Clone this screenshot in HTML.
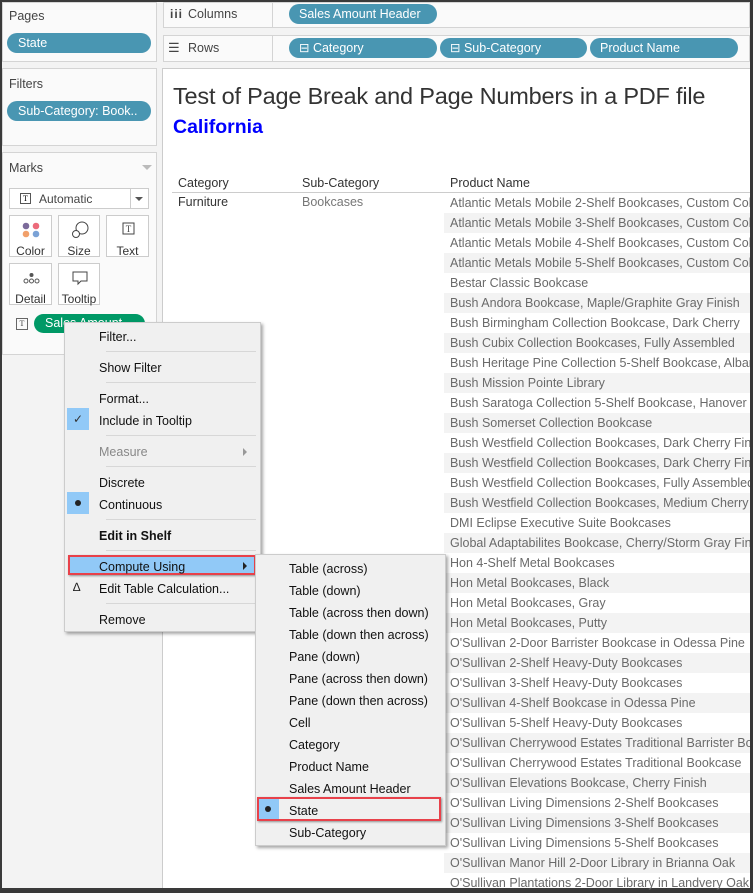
<!DOCTYPE html>
<html><head><meta charset="utf-8"><style>
*{box-sizing:border-box;margin:0;padding:0}
body{width:753px;height:890px;overflow:hidden;background:#3a3a3a;font-family:"Liberation Sans",Arial,sans-serif;position:relative}
.a{position:absolute}
#frame{left:2px;top:2px;width:748px;height:886px;background:#f3f3f3}
.panel{background:#fafafa;border:1px solid #d4d4d4}
.pill{position:absolute;background:#4996b2;color:#fff;border-radius:10px;font-size:12.5px;line-height:20px;height:20px;padding-left:10px;white-space:nowrap;overflow:hidden}
.lbl{font-size:12.5px;color:#444}
.card{position:absolute;background:#fff;border:1px solid #ccc;font-size:12px;color:#333;text-align:center}
.row{position:absolute;left:444px;width:306px;height:20px;font-size:12.5px;color:#6a6a6a;line-height:20px;padding-left:6px;white-space:nowrap;overflow:hidden}
.sh{background:#f3f3f3}
.mi{position:absolute;left:34px;font-size:12.5px;color:#111;white-space:nowrap}
.sep{position:absolute;left:41px;width:150px;height:1px;background:#d7d7d7}
.si{position:absolute;left:33px;font-size:12.5px;color:#111;white-space:nowrap}
</style></head><body>
<div id="frame" class="a"></div>
<div class="a panel" style="left:2px;top:2px;width:155px;height:60px"></div>
<div class="a lbl" style="left:9px;top:9px">Pages</div>
<div class="pill" style="left:7px;top:33px;width:144px;padding-left:11px">State</div>
<div class="a panel" style="left:2px;top:68px;width:155px;height:78px"></div>
<div class="a lbl" style="left:9px;top:77px">Filters</div>
<div class="pill" style="left:7px;top:101px;width:144px;padding-left:11px">Sub-Category: Book..</div>
<div class="a panel" style="left:2px;top:152px;width:155px;height:203px"></div>
<div class="a lbl" style="left:9px;top:161px">Marks</div>
<div class="a" style="left:142px;top:165px;width:0;height:0;border-left:5px solid transparent;border-right:5px solid transparent;border-top:5px solid #bbb"></div>
<div class="a" style="left:9px;top:188px;width:140px;height:21px;background:#fff;border:1px solid #ccc"></div>
<div class="a" style="left:20px;top:193px;width:11px;height:11px;border:1px solid #555;font-size:8px;line-height:9px;text-align:center;font-family:'Liberation Serif',serif">T</div>
<div class="a" style="left:39px;top:192px;font-size:12px;color:#444">Automatic</div>
<div class="a" style="left:130px;top:188px;width:1px;height:21px;background:#ccc"></div>
<div class="a" style="left:135px;top:197px;border-left:4px solid transparent;border-right:4px solid transparent;border-top:4px solid #555"></div>
<div class="card" style="left:9px;top:215px;width:43px;height:42px"><svg width="43" height="24"><circle cx="16" cy="10" r="3.3" fill="#7c6a9a"/><circle cx="26" cy="10" r="3.3" fill="#ec6a7a"/><circle cx="16" cy="18" r="3.3" fill="#f1a06a"/><circle cx="26" cy="18" r="3.3" fill="#7aa2d6"/></svg><div style="margin-top:1px">Color</div></div>
<div class="card" style="left:58px;top:215px;width:42px;height:42px"><svg width="42" height="24"><circle cx="23" cy="12" r="6" fill="none" stroke="#444"/><circle cx="17" cy="18" r="3.5" fill="#fff" stroke="#444"/></svg><div style="margin-top:1px">Size</div></div>
<div class="card" style="left:106px;top:215px;width:43px;height:42px"><svg width="43" height="24"><rect x="16" y="7" width="11" height="11" fill="none" stroke="#444"/><text x="21.5" y="16" font-size="9" text-anchor="middle" fill="#444" font-family="Liberation Serif">T</text></svg><div style="margin-top:1px">Text</div></div>
<div class="card" style="left:9px;top:263px;width:43px;height:42px"><svg width="43" height="24"><circle cx="21.5" cy="11" r="2" fill="#555"/><circle cx="16" cy="17" r="2" fill="none" stroke="#555"/><circle cx="21.5" cy="17" r="2" fill="none" stroke="#555"/><circle cx="27" cy="17" r="2" fill="none" stroke="#555"/></svg><div style="margin-top:1px">Detail</div></div>
<div class="card" style="left:58px;top:263px;width:42px;height:42px"><svg width="42" height="24"><path d="M14 8h14v9h-6l-3 3v-3h-5z" fill="none" stroke="#444"/></svg><div style="margin-top:1px">Tooltip</div></div>
<div class="a" style="left:16px;top:318px;width:12px;height:12px;border:1px solid #666;font-size:8px;line-height:10px;text-align:center;font-family:'Liberation Serif',serif;color:#444">T</div>
<div class="a" style="left:34px;top:314px;width:111px;height:19px;background:#009966;border-radius:10px;color:#fff;font-size:12.5px;line-height:19px;padding-left:11px">Sales Amount</div>
<div class="a panel" style="left:163px;top:2px;width:587px;height:26px;background:#fafafa"></div>
<div class="a" style="left:170px;top:7px;font-size:12px;color:#444;font-weight:bold;letter-spacing:1px">iii</div>
<div class="a lbl" style="left:188px;top:7px">Columns</div>
<div class="a" style="left:272px;top:2px;width:1px;height:26px;background:#d4d4d4"></div>
<div class="pill" style="left:289px;top:4px;width:148px">Sales Amount Header</div>
<div class="a panel" style="left:163px;top:35px;width:587px;height:27px"></div>
<div class="a" style="left:168px;top:40px;font-size:13px;color:#444">☰</div>
<div class="a lbl" style="left:188px;top:41px">Rows</div>
<div class="a" style="left:272px;top:35px;width:1px;height:27px;background:#d4d4d4"></div>
<div class="pill" style="left:289px;top:38px;width:148px">⊟ Category</div>
<div class="pill" style="left:440px;top:38px;width:147px">⊟ Sub-Category</div>
<div class="pill" style="left:590px;top:38px;width:148px">Product Name</div>
<div class="a" style="left:162px;top:68px;width:588px;height:820px;background:#fff;border-left:1px solid #ccc;border-top:1px solid #ccc"></div>
<div class="a" style="left:173px;top:83px;font-size:23.5px;color:#333;white-space:nowrap;letter-spacing:-0.2px">Test of Page Break and Page Numbers in a PDF file</div>
<div class="a" style="left:173px;top:116px;font-size:19.5px;color:#0000ff;font-weight:bold">California</div>
<div class="a" style="left:172px;top:192px;width:578px;height:1px;background:#ccc"></div>
<div class="a" style="left:178px;top:176px;font-size:12.5px;color:#333">Category</div>
<div class="a" style="left:302px;top:176px;font-size:12.5px;color:#333">Sub-Category</div>
<div class="a" style="left:450px;top:176px;font-size:12.5px;color:#333">Product Name</div>
<div class="a" style="left:178px;top:195px;font-size:12.5px;color:#333">Furniture</div>
<div class="a" style="left:302px;top:195px;font-size:12.5px;color:#777">Bookcases</div>
<div class="row" style="top:193px">Atlantic Metals Mobile 2-Shelf Bookcases, Custom Colors</div>
<div class="row sh" style="top:213px">Atlantic Metals Mobile 3-Shelf Bookcases, Custom Colors</div>
<div class="row" style="top:233px">Atlantic Metals Mobile 4-Shelf Bookcases, Custom Colors</div>
<div class="row sh" style="top:253px">Atlantic Metals Mobile 5-Shelf Bookcases, Custom Colors</div>
<div class="row" style="top:273px">Bestar Classic Bookcase</div>
<div class="row sh" style="top:293px">Bush Andora Bookcase, Maple/Graphite Gray Finish</div>
<div class="row" style="top:313px">Bush Birmingham Collection Bookcase, Dark Cherry</div>
<div class="row sh" style="top:333px">Bush Cubix Collection Bookcases, Fully Assembled</div>
<div class="row" style="top:353px">Bush Heritage Pine Collection 5-Shelf Bookcase, Albany Pine</div>
<div class="row sh" style="top:373px">Bush Mission Pointe Library</div>
<div class="row" style="top:393px">Bush Saratoga Collection 5-Shelf Bookcase, Hanover Cherry</div>
<div class="row sh" style="top:413px">Bush Somerset Collection Bookcase</div>
<div class="row" style="top:433px">Bush Westfield Collection Bookcases, Dark Cherry Finish</div>
<div class="row sh" style="top:453px">Bush Westfield Collection Bookcases, Dark Cherry Finish</div>
<div class="row" style="top:473px">Bush Westfield Collection Bookcases, Fully Assembled</div>
<div class="row sh" style="top:493px">Bush Westfield Collection Bookcases, Medium Cherry Finish</div>
<div class="row" style="top:513px">DMI Eclipse Executive Suite Bookcases</div>
<div class="row sh" style="top:533px">Global Adaptabilites Bookcase, Cherry/Storm Gray Finish</div>
<div class="row" style="top:553px">Hon 4-Shelf Metal Bookcases</div>
<div class="row sh" style="top:573px">Hon Metal Bookcases, Black</div>
<div class="row" style="top:593px">Hon Metal Bookcases, Gray</div>
<div class="row sh" style="top:613px">Hon Metal Bookcases, Putty</div>
<div class="row" style="top:633px">O'Sullivan 2-Door Barrister Bookcase in Odessa Pine</div>
<div class="row sh" style="top:653px">O'Sullivan 2-Shelf Heavy-Duty Bookcases</div>
<div class="row" style="top:673px">O'Sullivan 3-Shelf Heavy-Duty Bookcases</div>
<div class="row sh" style="top:693px">O'Sullivan 4-Shelf Bookcase in Odessa Pine</div>
<div class="row" style="top:713px">O'Sullivan 5-Shelf Heavy-Duty Bookcases</div>
<div class="row sh" style="top:733px">O'Sullivan Cherrywood Estates Traditional Barrister Bookcase</div>
<div class="row" style="top:753px">O'Sullivan Cherrywood Estates Traditional Bookcase</div>
<div class="row sh" style="top:773px">O'Sullivan Elevations Bookcase, Cherry Finish</div>
<div class="row" style="top:793px">O'Sullivan Living Dimensions 2-Shelf Bookcases</div>
<div class="row sh" style="top:813px">O'Sullivan Living Dimensions 3-Shelf Bookcases</div>
<div class="row" style="top:833px">O'Sullivan Living Dimensions 5-Shelf Bookcases</div>
<div class="row sh" style="top:853px">O'Sullivan Manor Hill 2-Door Library in Brianna Oak</div>
<div class="row" style="top:873px">O'Sullivan Plantations 2-Door Library in Landvery Oak</div>
<div class="a" style="left:64px;top:322px;width:197px;height:310px;background:#f0f0f0;border:1px solid #ccc;box-shadow:2px 2px 3px rgba(0,0,0,.35)">
<div class="mi" style="top:7px">Filter...</div>
<div class="sep" style="top:28px"></div>
<div class="mi" style="top:38px">Show Filter</div>
<div class="sep" style="top:59px"></div>
<div class="mi" style="top:69px">Format...</div>
<div class="a" style="left:2px;top:85px;width:22px;height:22px;background:#91c9f7;text-align:center;font-size:12px;line-height:22px;color:#333">✓</div>
<div class="mi" style="top:91px">Include in Tooltip</div>
<div class="sep" style="top:112px"></div>
<div class="mi" style="top:122px;color:#888">Measure</div>
<div class="a" style="left:178px;top:125px;border-top:4px solid transparent;border-bottom:4px solid transparent;border-left:4px solid #999"></div>
<div class="sep" style="top:143px"></div>
<div class="mi" style="top:153px">Discrete</div>
<div class="a" style="left:2px;top:169px;width:22px;height:22px;background:#91c9f7"><div class="a" style="left:8px;top:8px;width:6px;height:6px;border-radius:3px;background:#222"></div></div>
<div class="mi" style="top:175px">Continuous</div>
<div class="sep" style="top:196px"></div>
<div class="mi" style="top:206px;font-weight:bold">Edit in Shelf</div>
<div class="sep" style="top:227px"></div>
<div class="a" style="left:3px;top:232px;width:188px;height:20px;background:#91c9f7;border:2px solid #e8414a;box-shadow:1px 1px 2px rgba(0,0,0,.4)"></div>
<div class="mi" style="top:237px">Compute Using</div>
<div class="a" style="left:178px;top:239px;border-top:4px solid transparent;border-bottom:4px solid transparent;border-left:4px solid #222"></div>
<div class="a" style="left:8px;top:257px;font-size:12px;color:#222">∆</div>
<div class="mi" style="top:259px">Edit Table Calculation...</div>
<div class="sep" style="top:280px"></div>
<div class="mi" style="top:290px">Remove</div>
</div>
<div class="a" style="left:255px;top:554px;width:191px;height:292px;background:#f0f0f0;border:1px solid #ccc;box-shadow:2px 2px 3px rgba(0,0,0,.35)">
<div class="si" style="top:7px">Table (across)</div>
<div class="si" style="top:29px">Table (down)</div>
<div class="si" style="top:51px">Table (across then down)</div>
<div class="si" style="top:73px">Table (down then across)</div>
<div class="si" style="top:95px">Pane (down)</div>
<div class="si" style="top:117px">Pane (across then down)</div>
<div class="si" style="top:139px">Pane (down then across)</div>
<div class="si" style="top:161px">Cell</div>
<div class="si" style="top:183px">Category</div>
<div class="si" style="top:205px">Product Name</div>
<div class="si" style="top:227px">Sales Amount Header</div>
<div class="a" style="left:1px;top:243px;width:22px;height:22px;background:#91c9f7"><div class="a" style="left:8px;top:8px;width:6px;height:6px;border-radius:3px;background:#222"></div></div>
<div class="a" style="left:1px;top:242px;width:184px;height:24px;border:2px solid #e8414a;box-shadow:1px 1px 2px rgba(0,0,0,.4)"></div>
<div class="si" style="top:249px">State</div>
<div class="si" style="top:271px">Sub-Category</div>
</div>
</body></html>
